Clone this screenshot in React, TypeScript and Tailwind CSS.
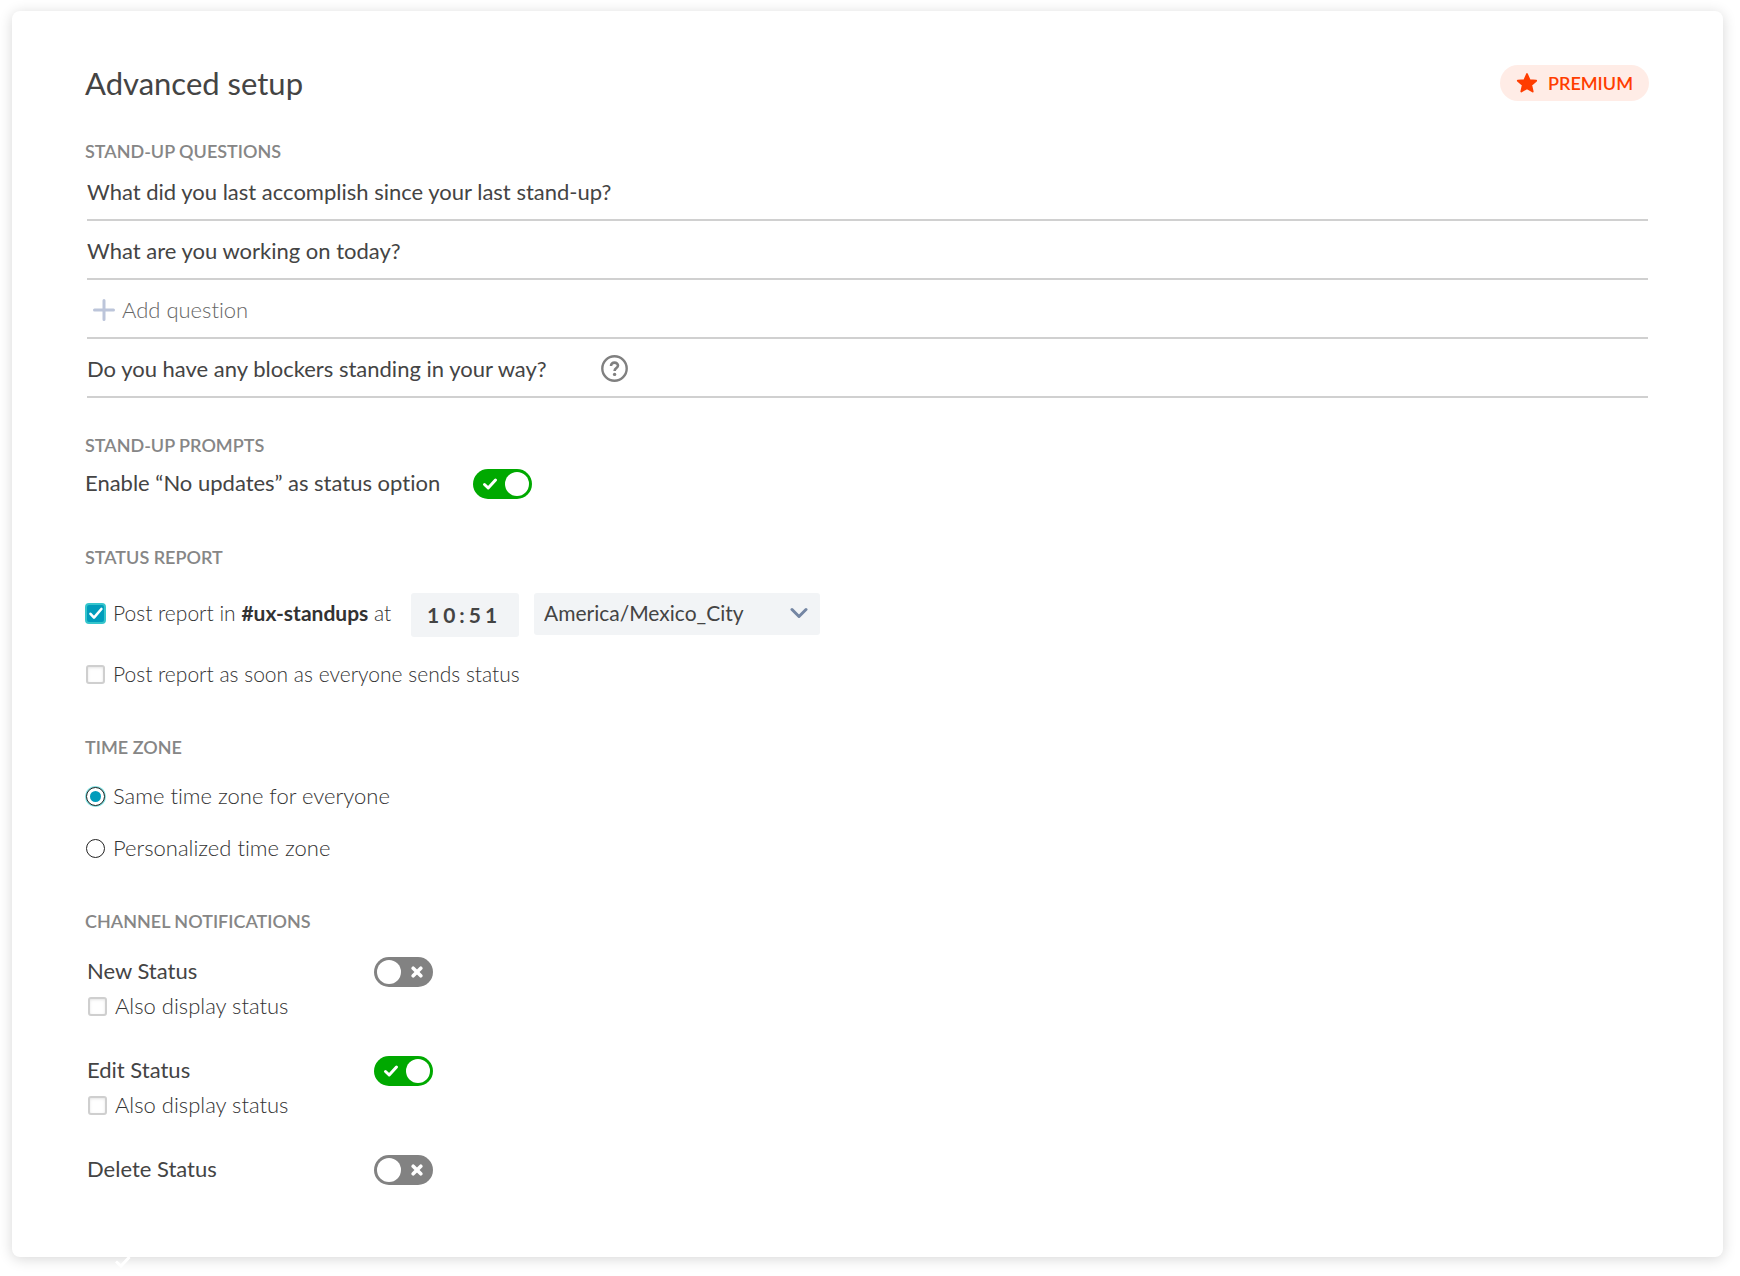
import { useState } from "react";
import type { ReactNode } from "react";

type ToggleProps = {
  label: string;
  checked: boolean;
  onChange: (value: boolean) => void;
};

function Toggle({ label, checked, onChange }: ToggleProps) {
  return (
    <button
      type="button"
      role="switch"
      aria-checked={checked}
      aria-label={label}
      onClick={() => onChange(!checked)}
      className={`flex h-[30px] w-[59px] shrink-0 cursor-pointer items-center justify-between rounded-full px-[3px] ${
        checked ? "flex-row-reverse bg-[#00a900]" : "bg-[#828282]"
      }`}
    >
      <span className="size-6 rounded-full bg-white" />
      {checked ? (
        <svg viewBox="0 0 16 14" className="mx-[6px] h-[14px] w-4" fill="none" aria-hidden="true">
          <path d="M2.5 7.5 6.2 11 13.5 3" stroke="#fff" strokeWidth="3" strokeLinecap="round" strokeLinejoin="round" />
        </svg>
      ) : (
        <svg viewBox="0 0 12 12" className="mx-[7px] size-3" fill="none" aria-hidden="true">
          <path d="M2.2 2.2 9.8 9.8M9.8 2.2 2.2 9.8" stroke="#fff" strokeWidth="3.6" strokeLinecap="round" />
        </svg>
      )}
    </button>
  );
}

type OptionProps = {
  checked: boolean;
  onChange: () => void;
  children: ReactNode;
};

function Checkbox({ checked, onChange, children }: OptionProps) {
  return (
    <label className="flex w-fit cursor-pointer items-center gap-[7px] font-light text-[#333]">
      <span className="grid size-[21px] place-items-center">
        <input
          type="checkbox"
          checked={checked}
          onChange={onChange}
          className="peer col-start-1 row-start-1 size-[19px] appearance-none rounded-[3px] border-2 border-[#cfcfcf] bg-white shadow-[inset_0_1px_3px_#e4e4e4] checked:size-[21px] checked:rounded-sm checked:border-[#35c5cc] checked:bg-[#009cbb] checked:shadow-none"
        />
        <svg viewBox="0 0 20 20" className="pointer-events-none col-start-1 row-start-1 hidden size-5 peer-checked:block" fill="none" aria-hidden="true">
          <path d="M4.5 10.8 8 14.6 15.4 6" stroke="#fff" strokeWidth="2.6" strokeLinecap="round" strokeLinejoin="round" />
        </svg>
      </span>
      <span>{children}</span>
    </label>
  );
}

function Radio({ checked, onChange, children }: OptionProps) {
  return (
    <label className="flex w-fit cursor-pointer items-center gap-[7px] font-light text-[#333]">
      <span className="grid size-[21px] place-items-center">
        <input
          type="radio"
          name="timezone"
          checked={checked}
          onChange={onChange}
          className="peer col-start-1 row-start-1 size-[19px] appearance-none rounded-full border border-[#222] bg-white ring-[#7fdfe0] outline-none checked:ring-1"
        />
        <span className="pointer-events-none col-start-1 row-start-1 hidden size-[11px] rounded-full bg-[#009cbb] peer-checked:block" />
      </span>
      <span>{children}</span>
    </label>
  );
}

function SectionTitle({ children }: { children: ReactNode }) {
  return <h2 className="text-[18px] leading-6 font-semibold text-[#868686] uppercase">{children}</h2>;
}

const notifications = [
  { id: "new", title: "New Status", display: true },
  { id: "edit", title: "Edit Status", display: true },
  { id: "delete", title: "Delete Status", display: false },
];

export default function App() {
  const [noUpdates, setNoUpdates] = useState(true);
  const [postAt, setPostAt] = useState(true);
  const [postAll, setPostAll] = useState(false);
  const [zone, setZone] = useState("same");
  const [enabled, setEnabled] = useState<Record<string, boolean>>({ new: false, edit: true, delete: false });
  const [display, setDisplay] = useState<Record<string, boolean>>({ new: false, edit: false });

  return (
    <div className="bg-white pt-[11px] pr-[17px] pb-[19px] pl-3 font-['Lato',sans-serif] text-[22px] leading-7 text-[#444] [font-variant-ligatures:none]">
      <main className="relative rounded-lg bg-white pt-[52px] pr-[74px] pb-[72px] pl-[73px] shadow-[0_2px_14px_rgba(0,0,0,0.16)]">
        <header className="flex items-center justify-between">
          <h1 className="text-[31px] leading-10">Advanced setup</h1>
          <span className="flex h-9 items-center gap-[10px] rounded-full bg-[#ffece6] px-4 text-[18px] font-semibold text-[#ff3d00]">
            <svg viewBox="0 0 24 24" className="size-[22px]" fill="currentColor" stroke="currentColor" strokeWidth="2" strokeLinejoin="round" aria-hidden="true">
              <path d="M12 2.2 14.9 8.8 22 9.5 16.6 14.2 18.2 21.3 12 17.6 5.8 21.3 7.4 14.2 2 9.5 9.1 8.8Z" />
            </svg>
            PREMIUM
          </span>
        </header>

        <section className="mt-9">
          <SectionTitle>Stand-up questions</SectionTitle>
          <div className="mr-px ml-[2px]">
            <div className="flex h-[58px] items-center border-b-2 border-[#d0d0d0] pt-[2px]">
              <input aria-label="Question 1" defaultValue="What did you last accomplish since your last stand-up?" className="w-full outline-none" />
            </div>
            <div className="flex h-[59px] items-center border-b-2 border-[#d0d0d0] pt-[2px]">
              <input aria-label="Question 2" defaultValue="What are you working on today?" className="w-full outline-none" />
            </div>
            <div className="flex h-[59px] items-center border-b-2 border-[#d0d0d0] pt-[2px]">
              <button type="button" className="flex cursor-pointer items-center gap-[7px] pl-[6px] font-light text-[#666]">
                <svg viewBox="0 0 22 22" className="size-[22px]" fill="none" aria-hidden="true">
                  <path d="M11 1.5V20.5M1.5 11H20.5" stroke="#bcc5da" strokeWidth="3" strokeLinecap="round" />
                </svg>
                Add question
              </button>
            </div>
            <div className="flex h-[59px] items-center border-b-2 border-[#d0d0d0] pt-[2px]">
              <input aria-label="Blockers question" defaultValue="Do you have any blockers standing in your way?" className="w-[514px] outline-none" />
              <button type="button" aria-label="Help" className="cursor-pointer text-[#808080]">
                <svg viewBox="0 0 27 27" className="size-[27px]" fill="none" stroke="currentColor" aria-hidden="true">
                  <circle cx="13.5" cy="13.5" r="12.2" strokeWidth="2.4" />
                  <path d="M10 10.9C10 8.9 11.5 7.6 13.5 7.6S17 8.9 17 10.6C17 13 13.6 13.2 13.6 15.9" strokeWidth="2.6" />
                  <circle cx="13.6" cy="19.4" r="1.7" fill="currentColor" stroke="none" />
                </svg>
              </button>
            </div>
          </div>
        </section>

        <section className="mt-[35px]">
          <SectionTitle>Stand-up prompts</SectionTitle>
          <div className="mt-3 flex items-start">
            <span className="w-[388px]">Enable “No updates” as status option</span>
            <Toggle label="Enable no updates as status option" checked={noUpdates} onChange={setNoUpdates} />
          </div>
        </section>

        <section className="mt-[46px]">
          <SectionTitle>Status report</SectionTitle>
          <div className="mt-6 text-[21px]">
            <div className="flex items-start">
              <div className="flex h-10 w-[326px] items-center">
                <Checkbox checked={postAt} onChange={() => setPostAt(!postAt)}>
                  Post report in <b className="font-bold">#ux-standups</b> at
                </Checkbox>
              </div>
              <input
                aria-label="Report time"
                defaultValue="10:51"
                className="h-11 w-[108px] rounded-[3px] bg-[#f2f4f6] pb-[2px] pl-4 font-bold tracking-[4px] outline-none"
              />
              <div className="relative ml-[15px]">
                <select aria-label="Report time zone" className="h-[42px] w-[286px] appearance-none rounded-[3px] bg-[#f2f4f6] px-[10px] pb-[2px] outline-none">
                  <option>America/Mexico_City</option>
                </select>
                <svg viewBox="0 0 18 12" className="pointer-events-none absolute top-[14px] right-3 h-3 w-[18px]" fill="none" aria-hidden="true">
                  <path d="M2 2.5 9 9.5 16 2.5" stroke="#7486a3" strokeWidth="3" strokeLinecap="round" strokeLinejoin="round" />
                </svg>
              </div>
            </div>
            <div className="mt-[23px]">
              <Checkbox checked={postAll} onChange={() => setPostAll(!postAll)}>
                Post report as soon as everyone sends status
              </Checkbox>
            </div>
          </div>
        </section>

        <section className="mt-[47px]">
          <SectionTitle>Time zone</SectionTitle>
          <div className="mt-[23px] grid gap-6">
            <Radio checked={zone === "same"} onChange={() => setZone("same")}>
              Same time zone for everyone
            </Radio>
            <Radio checked={zone === "personal"} onChange={() => setZone("personal")}>
              Personalized time zone
            </Radio>
          </div>
        </section>

        <section className="mt-[47px]">
          <SectionTitle>Channel notifications</SectionTitle>
          <div className="mt-6 ml-[2px] grid gap-9">
            {notifications.map((item) => (
              <div key={item.id} className="grid gap-[5px]">
                <div className="flex items-start">
                  <span className="w-[287px]">{item.title}</span>
                  <Toggle
                    label={item.title}
                    checked={enabled[item.id]}
                    onChange={(value) => setEnabled({ ...enabled, [item.id]: value })}
                  />
                </div>
                {item.display && (
                  <Checkbox
                    checked={display[item.id]}
                    onChange={() => setDisplay({ ...display, [item.id]: !display[item.id] })}
                  >
                    Also display status
                  </Checkbox>
                )}
              </div>
            ))}
          </div>
        </section>

        <svg viewBox="0 0 16 12" className="absolute -bottom-[11px] left-[103px] h-3 w-4" fill="none" aria-hidden="true">
          <path d="M1 5.5 6 10 14.5 1" stroke="#fff" strokeWidth="3" />
        </svg>
      </main>
    </div>
  );
}
